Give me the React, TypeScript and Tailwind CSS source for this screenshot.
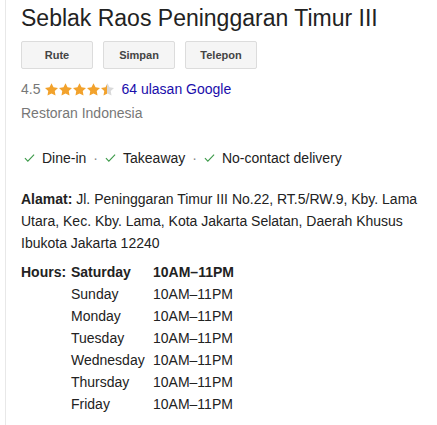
import React from "react";

const STAR =
  "M12 2l3.09 6.26L22 9.27l-5 4.87 1.18 6.88L12 17.77l-6.18 3.25L7 14.14 2 9.27l6.91-1.01L12 2z";

function Star({ half = false }: { half?: boolean }) {
  return (
    <svg viewBox="2 2 20 19.5" className="h-[13px] w-[13px]">
      {half && (
        <defs>
          <linearGradient id="half-star">
            <stop offset="50%" stopColor="#f2a22c" />
            <stop offset="50%" stopColor="#d9d9d9" />
          </linearGradient>
        </defs>
      )}
      <path d={STAR} fill={half ? "url(#half-star)" : "#f2a22c"} />
    </svg>
  );
}

function Check() {
  return (
    <svg viewBox="0 0 12 10" className="mr-[7px] h-[10px] w-[11px] shrink-0">
      <path d="M1 5.2l3.2 3.2L11 1.2" fill="none" stroke="#3d9a4a" strokeWidth="1.2" />
    </svg>
  );
}

const hours = [
  ["Saturday", "10AM–11PM"],
  ["Sunday", "10AM–11PM"],
  ["Monday", "10AM–11PM"],
  ["Tuesday", "10AM–11PM"],
  ["Wednesday", "10AM–11PM"],
  ["Thursday", "10AM–11PM"],
  ["Friday", "10AM–11PM"],
];

const features = ["Dine-in", "Takeaway", "No-contact delivery"];

export default function App() {
  return (
    <div className="h-[425px] w-[437px] overflow-hidden bg-white font-['Liberation_Sans',Arial,sans-serif] text-[#222]">
      <div className="ml-[5px] h-full border-l border-[#e8e8e8] pl-[15px] pr-[5px] pt-[5px]">
        <h1 className="text-[23px] leading-[26px] text-[#222]">
          Seblak Raos Peninggaran Timur III
        </h1>

        <div className="mt-[10px] flex gap-[10px]">
          {["Rute", "Simpan", "Telepon"].map((label) => (
            <button
              key={label}
              className="flex h-[28px] w-[72px] items-center justify-center rounded-[2px] border border-[#dcdcdc] bg-[#f5f5f5] text-[11px] font-bold text-[#444]"
            >
              {label}
            </button>
          ))}
        </div>

        <div className="mt-[9px] flex items-center text-[14px] leading-[22px]">
          <span className="text-[#777]">4.5</span>
          <span className="ml-[5px] flex gap-[1px]">
            <Star />
            <Star />
            <Star />
            <Star />
            <Star half />
          </span>
          <span className="ml-[7px] text-[#1a0dab]">64 ulasan Google</span>
        </div>

        <div className="mt-[2px] text-[14px] leading-[22px] text-[#777]">
          Restoran Indonesia
        </div>

        <div className="mt-[23px] flex items-center pl-[3px] text-[14px] leading-[22px] text-[#222]">
          {features.map((f, i) => (
            <React.Fragment key={f}>
              <Check />
              <span>{f}</span>
              {i < features.length - 1 && (
                <span className="mx-[7px] text-[#888]">·</span>
              )}
            </React.Fragment>
          ))}
        </div>

        <p className="mt-[19px] text-[14px] leading-[22px] text-[#222]">
          <span className="font-bold">Alamat:</span> Jl. Peninggaran Timur III
          No.22, RT.5/RW.9, Kby. Lama Utara, Kec. Kby. Lama, Kota Jakarta
          Selatan, Daerah Khusus Ibukota Jakarta 12240
        </p>

        <div className="mt-[7px] flex text-[14px] leading-[22px] text-[#222]">
          <div className="w-[50px] font-bold">Hours:</div>
          <div className="grid grid-cols-[82px_auto]">
            {hours.map(([day, time], i) => (
              <React.Fragment key={day}>
                <div className={i === 0 ? "font-bold" : ""}>{day}</div>
                <div className={i === 0 ? "font-bold" : ""}>{time}</div>
              </React.Fragment>
            ))}
          </div>
        </div>
      </div>
    </div>
  );
}
